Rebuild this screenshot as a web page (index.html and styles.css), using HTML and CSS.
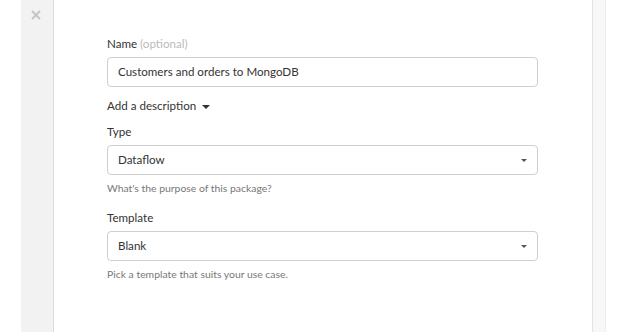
FILE: index.html
```html
<!DOCTYPE html>
<html lang="en">

<head>
	<meta charset="UTF-8">
	<title>New package</title>
	<link rel="stylesheet" href="styles.css">
</head>

<body>
	<div class="layout">
		<div class="gutter"></div>
		<aside class="side">
			<button class="close" title="Close">
				<svg width="10" height="10" viewBox="0 0 10 10">
					<path d="M1 1L9 9M9 1L1 9" stroke="#c4c4c4" stroke-width="1.8" fill="none" />
				</svg>
			</button>
		</aside>
		<main class="panel">
			<form class="form">
				<div class="field tight">
					<label class="label">Name <span class="muted">(optional)</span></label>
					<div class="box">Customers and orders to MongoDB</div>
				</div>
				<div class="desc">Add a description <span class="caret"></span></div>
				<div class="field">
					<label class="label">Type</label>
					<div class="box select">Dataflow <span class="caret small"></span></div>
					<p class="hint">What's the purpose of this package?</p>
				</div>
				<div class="field">
					<label class="label">Template</label>
					<div class="box select">Blank <span class="caret small"></span></div>
					<p class="hint">Pick a template that suits your use case.</p>
				</div>
			</form>
		</main>
		<div class="strip"></div>
	</div>
</body>

</html>
```

FILE: styles.css
```css
body {
	margin: 0;
	background-color: #fff;
	color: #333;
	font: 11.6px 'Lato', 'Helvetica Neue', Arial, sans-serif;
}

.layout {
	display: flex;
	height: 332px;
}

.gutter {
	width: 21px;
}

.side {
	width: 32px;
	background-color: #f2f2f2;
	border-right: 1px solid #dcdcdc;
}

.close {
	display: block;
	margin: 10px 0 0 10px;
	padding: 0;
	width: 10px;
	height: 10px;
	border: 0;
	background: none;
	line-height: 0;
}

.panel {
	width: 538px;
	border-right: 1px solid #e3e3e3;
}

.strip {
	width: 12px;
	background-color: #f7f7f7;
	border-right: 1px solid #ececec;
}

.form {
	width: 431px;
	margin: 37px 0 0 53px;
}

.field {
	margin-bottom: 17px;
}

.field.tight {
	margin-bottom: 12px;
}

.label {
	display: block;
	margin-bottom: 6px;
	line-height: 14px;
}

.muted {
	color: #bbb;
}

.box {
	height: 28px;
	line-height: 28px;
	padding: 0 10px;
	border: 1px solid #cfcfcf;
	border-radius: 4px;
	position: relative;
}

.select .caret {
	position: absolute;
	right: 10px;
	top: 13px;
}

.caret {
	display: inline-block;
	vertical-align: middle;
	margin-left: 3px;
	border-left: 4px solid transparent;
	border-right: 4px solid transparent;
	border-top: 4px solid #333;
}

.caret.small {
	border-left-width: 3.5px;
	border-right-width: 3.5px;
	border-top: 3px solid #555;
}

.desc {
	line-height: 14px;
	margin: 0 0 12px;
}

.hint {
	margin: 7px 0 0;
	font-size: 10.4px;
	line-height: 12px;
	color: #777;
}
```
